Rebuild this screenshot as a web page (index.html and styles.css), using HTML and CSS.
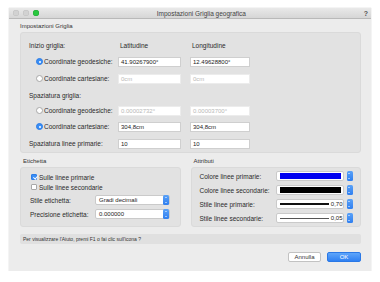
FILE: index.html
```html
<!DOCTYPE html>
<html>
<head>
<meta charset="utf-8">
<link rel="stylesheet" href="styles.css">
</head>
<body>
<div class="window">
  <div class="titlebar">
    <div class="lights"><span class="light"></span><span class="light"></span><span class="light green"></span></div>
    <div class="title">Impostazioni Griglia geografica</div>
    <div class="help">?</div>
  </div>
  <div class="content">
    <div class="section-label">Impostazioni Griglia</div>
    <div class="group main">
      <div class="row r1">
        <div class="lab">Inizio griglia:</div>
        <div class="colhead">Latitudine</div>
        <div class="colhead">Longitudine</div>
      </div>
      <div class="row r2">
        <div class="lab radio-lab"><span class="radio on"></span>Coordinate geodesiche:</div>
        <div class="field">41.90267900°</div>
        <div class="field">12.49628800°</div>
      </div>
      <div class="row r3">
        <div class="lab radio-lab"><span class="radio"></span>Coordinate cartesiane:</div>
        <div class="field dis">0cm</div>
        <div class="field dis">0cm</div>
      </div>
      <div class="row r4">
        <div class="lab">Spaziatura griglia:</div>
      </div>
      <div class="row r5">
        <div class="lab radio-lab"><span class="radio"></span>Coordinate geodesiche:</div>
        <div class="field dis">0.00002732°</div>
        <div class="field dis">0.00003700°</div>
      </div>
      <div class="row r6">
        <div class="lab radio-lab"><span class="radio on"></span>Coordinate cartesiane:</div>
        <div class="field">304,8cm</div>
        <div class="field">304,8cm</div>
      </div>
      <div class="row r7">
        <div class="lab">Spaziatura linee primarie:</div>
        <div class="field">10</div>
        <div class="field">10</div>
      </div>
    </div>
    <div class="bottom">
      <div class="col left">
        <div class="section-label small">Etichetta</div>
        <div class="group sub">
          <div class="check-row"><span class="check on"></span>Sulle linee primarie</div>
          <div class="check-row"><span class="check"></span>Sulle linee secondarie</div>
          <div class="sel-row r-a">
            <div class="slab">Stile etichetta:</div>
            <div class="popup"><span class="ptext">Gradi decimali</span><span class="stepper"></span></div>
          </div>
          <div class="sel-row r-b">
            <div class="slab">Precisione etichetta:</div>
            <div class="popup"><span class="ptext">0.000000</span><span class="stepper"></span></div>
          </div>
        </div>
      </div>
      <div class="col right">
        <div class="section-label small">Attributi</div>
        <div class="group sub attr">
          <div class="attr-row">
            <div class="alab">Colore linee primarie:</div>
            <div class="swatch-wrap"><span class="swatch blue"></span></div>
            <span class="stepper"></span>
          </div>
          <div class="attr-row">
            <div class="alab">Colore linee secondarie:</div>
            <div class="swatch-wrap"><span class="swatch black"></span></div>
            <span class="stepper"></span>
          </div>
          <div class="attr-row">
            <div class="alab">Stile linee primarie:</div>
            <div class="swatch-wrap line"><span class="lstroke thick"></span><span class="lval">0,70</span></div>
            <span class="stepper"></span>
          </div>
          <div class="attr-row">
            <div class="alab">Stile linee secondarie:</div>
            <div class="swatch-wrap line"><span class="lstroke thin"></span><span class="lval">0,05</span></div>
            <span class="stepper"></span>
          </div>
        </div>
      </div>
    </div>
    <div class="helpbar">Per visualizzare l'Aiuto, premi F1 o fai clic sull'icona ?</div>
    <div class="buttons">
      <div class="btn">Annulla</div>
      <div class="btn ok">OK</div>
    </div>
  </div>
</div>
</body>
</html>
```
FILE: styles.css
```css
html, body {
  margin: 0;
  padding: 0;
  background: #ffffff;
}
body {
  font-family: "Liberation Sans", Arial, sans-serif;
  font-size: 6.5px;
  color: #2a2a2a;
  padding: 8px 0 0 9px;
}
.window {
  width: 362px;
  height: 263px;
  background: #ececec;
  box-shadow: 0 0 1px rgba(0,0,0,0.25);
  display: flex;
  flex-direction: column;
}
.titlebar {
  height: 11px;
  background: linear-gradient(#e9e9e9, #d6d6d6);
  border-bottom: 1px solid #b9b9b9;
  box-sizing: border-box;
  display: flex;
  align-items: center;
  position: relative;
  padding: 0 3px 0 4px;
}
.lights {
  display: flex;
  gap: 4px;
}
.light {
  width: 6px;
  height: 6px;
  border-radius: 50%;
  background: #d2d2d2;
  box-shadow: inset 0 0 0 0.5px #c0c0c0;
}
.light.green {
  background: #29c83f;
  box-shadow: inset 0 0 0 0.5px #20a533;
}
.title {
  flex: 1;
  text-align: center;
  color: #444;
  font-size: 6.5px;
}
.help {
  font-weight: bold;
  color: #555;
  font-size: 7px;
}
.content {
  padding: 0 10px 0 11px;
  display: flex;
  flex-direction: column;
}
.section-label {
  height: 13px;
  line-height: 6px;
  padding-top: 4px;
  box-sizing: border-box;
  color: #333;
  font-size: 6px;
}
.section-label.small {
  height: 12px;
  padding: 3px 0 0 3px;
}
.group {
  background: #e2e2e2;
  border: 1px solid #dadada;
  border-radius: 3px;
  box-sizing: border-box;
}
.main {
  height: 121px;
  padding: 5px 0 0 8px;
  display: flex;
  flex-direction: column;
}
.row {
  display: grid;
  grid-template-columns: 80px 63px 60px;
  column-gap: 9px;
  align-items: center;
}
.r1 { height: 16px; }
.r2 { height: 16px; }
.r3 { height: 18px; }
.r4 { height: 16px; }
.r5 { height: 15px; }
.r6 { height: 17px; }
.r7 { height: 17px; }
.lab {
  color: #2a2a2a;
  white-space: nowrap;
}
.colhead {
  color: #2a2a2a;
  padding-left: 2px;
}
.radio-lab {
  display: flex;
  align-items: center;
  padding-left: 7px;
}
.radio {
  width: 7px;
  height: 7px;
  border-radius: 50%;
  background: #fff;
  border: 0.5px solid #a8a8a8;
  box-sizing: border-box;
  margin-right: 1px;
  position: relative;
  flex: none;
}
.radio.on {
  background: #3a8ef5;
  border-color: #2d7de6;
}
.radio.on::after {
  content: "";
  position: absolute;
  left: 2px;
  top: 2px;
  width: 2px;
  height: 2px;
  border-radius: 50%;
  background: #fff;
}
.field {
  height: 10px;
  background: #fff;
  border: 1px solid #cfcfcf;
  box-sizing: border-box;
  line-height: 8px;
  padding-left: 2px;
  color: #222;
  font-size: 6px;
  white-space: nowrap;
  overflow: hidden;
}
.field.dis {
  border-color: #ececec;
  color: #b8b8b8;
}
.bottom {
  display: flex;
  gap: 10px;
  margin-top: 2px;
}
.col.left { width: 161px; }
.col.right { width: 171px; }
.sub {
  height: 60px;
}
.left .sub {
  padding: 4px 0 0 9px;
  display: flex;
  flex-direction: column;
}
.check-row {
  height: 10px;
  display: flex;
  align-items: center;
  padding-left: 1px;
}
.check {
  width: 6px;
  height: 6px;
  border: 0.5px solid #a8a8a8;
  border-radius: 1px;
  background: #fff;
  box-sizing: border-box;
  margin-right: 2px;
  position: relative;
}
.check.on {
  background: #3a8ef5;
  border-color: #2d7de6;
}
.check.on::after {
  content: "";
  position: absolute;
  left: 1.5px;
  top: 0px;
  width: 1.5px;
  height: 3px;
  border: solid #fff;
  border-width: 0 1px 1px 0;
  transform: rotate(40deg);
}
.sel-row {
  display: flex;
  align-items: center;
  height: 14px;
}
.r-a { margin-top: 1px; }
.slab {
  width: 65px;
}
.popup {
  width: 75px;
  height: 10px;
  background: #fff;
  border: 0.5px solid #cacaca;
  box-sizing: border-box;
  border-radius: 2px;
  display: flex;
  align-items: center;
}
.ptext {
  flex: 1;
  padding-left: 3px;
  font-size: 6px;
  color: #222;
}
.stepper {
  width: 6px;
  height: 10px;
  background: linear-gradient(#5aa2f8, #2f7ff0);
  border-radius: 1.5px;
  box-sizing: border-box;
  position: relative;
}
.stepper::before, .stepper::after {
  content: "";
  position: absolute;
  left: 1.5px;
  width: 0;
  height: 0;
  border-left: 1.5px solid transparent;
  border-right: 1.5px solid transparent;
}
.stepper::before {
  top: 2px;
  border-bottom: 1.5px solid #fff;
}
.stepper::after {
  bottom: 2px;
  border-top: 1.5px solid #fff;
}
.attr {
  padding: 1px 0 0 8px;
  display: flex;
  flex-direction: column;
}
.attr-row {
  display: flex;
  align-items: center;
  height: 14px;
}
.alab {
  width: 76px;
}
.swatch-wrap {
  width: 68px;
  height: 10px;
  background: #fff;
  border: 0.5px solid #cacaca;
  box-sizing: border-box;
  border-radius: 2px;
  display: flex;
  align-items: center;
  padding: 0 2px 0 3px;
  margin-right: 3px;
}
.swatch {
  flex: 1;
  height: 6px;
}
.swatch.blue { background: #0000f0; }
.swatch.black { background: #000; }
.swatch-wrap.line { padding-right: 0; }
.lstroke {
  flex: 1;
  background: #111;
  margin-right: 2px;
}
.lstroke.thick { height: 1.5px; }
.lstroke.thin { height: 0.6px; background: #555; }
.lval {
  font-size: 6px;
  color: #222;
}
.helpbar {
  margin-top: 7px;
  height: 10px;
  background: #e0e0e0;
  border-radius: 2px;
  line-height: 10px;
  padding-left: 3px;
  font-size: 5px;
  color: #333;
}
.buttons {
  display: flex;
  justify-content: flex-end;
  gap: 6px;
  margin-top: 8px;
}
.btn {
  width: 33px;
  height: 10px;
  box-sizing: border-box;
  background: #fff;
  border: 0.5px solid #c2c2c2;
  border-radius: 2px;
  text-align: center;
  line-height: 9px;
  font-size: 6px;
  color: #333;
}
.btn.ok {
  width: 34px;
  background: linear-gradient(#5ea5fa, #2f80f2);
  border-color: #2a78e6;
  color: #fff;
}
```
